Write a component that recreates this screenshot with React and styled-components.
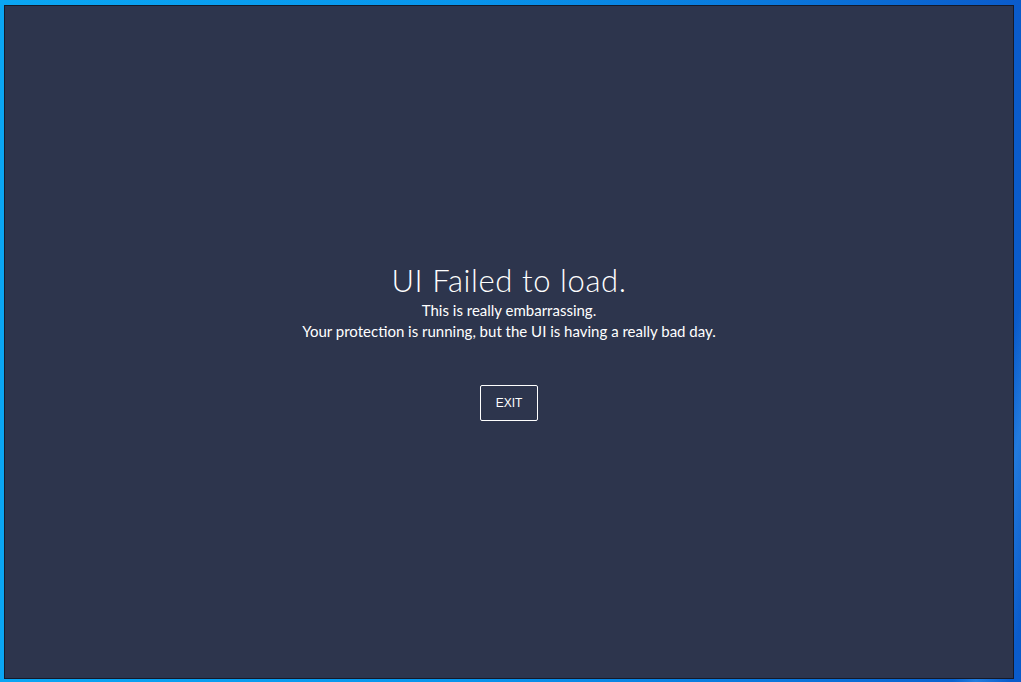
import React from "react";
import styled, { createGlobalStyle } from "styled-components";

const GlobalStyle = createGlobalStyle`
  html, body {
    margin: 0;
    padding: 0;
    overflow: hidden;
  }
  body {
    font-family: "Lato", "Open Sans", "Liberation Sans", sans-serif;
  }
`;

export default function App() {
  return (
    <>
      <GlobalStyle />
      <Desktop>
        <Window>
          <Message>
            <Title>UI Failed to load.</Title>
            <Line>This is really embarrassing.</Line>
            <Line>Your protection is running, but the UI is having a really bad day.</Line>
            <ExitButton>EXIT</ExitButton>
          </Message>
        </Window>
      </Desktop>
    </>
  );
}

let Desktop = styled.div`
  width: 1021px;
  height: 682px;
  box-sizing: border-box;
  padding: 5px 7px 3px 4px;
  display: flex;
  background:
    linear-gradient(100deg, transparent 94%, rgba(80, 180, 255, 0.35) 96%, transparent 99%),
    linear-gradient(90deg, #0aa6f3 0%, #0895ec 45%, #0a78dc 75%, #0a5bcb 100%);
`;

let Window = styled.div`
  flex: 1;
  display: flex;
  align-items: center;
  justify-content: center;
  background: #2d354d;
  border: 1px solid #141a2a;
`;

let Message = styled.div`
  display: flex;
  flex-direction: column;
  align-items: center;
  color: #ffffff;
  margin-top: -1px;
`;

let Title = styled.h1`
  margin: 0 0 2px;
  font-size: 31px;
  font-weight: 300;
  line-height: 36px;
  letter-spacing: 0.6px;
`;

let Line = styled.p`
  margin: 0;
  font-size: 15px;
  line-height: 21px;
`;

let ExitButton = styled.button`
  margin-top: 43px;
  width: 58px;
  height: 36px;
  background: transparent;
  border: 1px solid #ffffff;
  border-radius: 2px;
  color: #ffffff;
  font-family: "Liberation Sans", "Lato", sans-serif;
  font-size: 12px;
  font-weight: 500;
  cursor: pointer;
`;
